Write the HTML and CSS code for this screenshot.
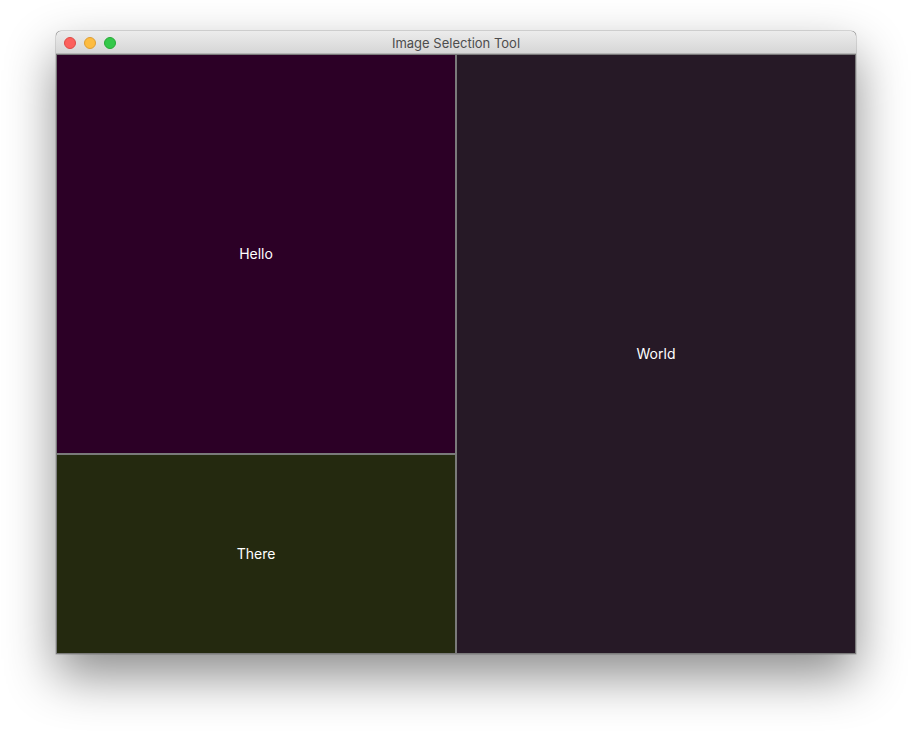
FILE: index.html
```html
<!DOCTYPE html>
<html>
<head>
<meta charset="utf-8">
<link rel="stylesheet" href="styles.css">
</head>
<body>
<div class="window">
  <div class="titlebar">
    <div class="lights">
      <span class="light close"></span>
      <span class="light min"></span>
      <span class="light max"></span>
    </div>
    <div class="title">Image Selection Tool</div>
  </div>
  <div class="content">
    <div class="col">
      <div class="cell hello">Hello</div>
      <div class="cell there">There</div>
    </div>
    <div class="cell world">World</div>
  </div>
</div>
</body>
</html>
```
FILE: styles.css
```css
html, body {
  margin: 0;
  padding: 0;
  background: #ffffff;
}
body {
  box-sizing: border-box;
  min-height: 734px;
  padding: 31px 0 80px 56px;
  font-family: "Open Sans", "Liberation Sans", sans-serif;
}
.window {
  width: 800px;
  border-radius: 5px 5px 0 0;
  box-shadow: 0 0 0 0.5px rgba(0,0,0,0.25), 0 22px 50px rgba(0,0,0,0.45);
  background: #1e1e1e;
}
.titlebar {
  position: relative;
  height: 23px;
  box-sizing: border-box;
  border-radius: 5px 5px 0 0;
  background: linear-gradient(#ececec, #d6d6d6);
  border-bottom: 1px solid #b5b5b5;
  display: flex;
  align-items: center;
  justify-content: center;
  padding-top: 2px;
}
.lights {
  position: absolute;
  left: 8px;
  top: 6px;
  display: flex;
  gap: 8px;
}
.light {
  width: 12px;
  height: 12px;
  border-radius: 50%;
  box-sizing: border-box;
}
.close { background: #fc605c; border: 0.5px solid #de4a45; }
.min { background: #fdbc40; border: 0.5px solid #de9e33; }
.max { background: #34c84a; border: 0.5px solid #27aa35; }
.title {
  font-size: 13px;
  color: #4d4d4d;
  line-height: 20px;
  font-family: "Inter", "Liberation Sans", sans-serif;
}
.content {
  display: flex;
  height: 600px;
}
.col {
  display: flex;
  flex-direction: column;
  width: 400px;
}
.cell {
  box-sizing: border-box;
  border: 1px solid #7a7a7a;
  display: flex;
  align-items: center;
  justify-content: center;
  color: #ffffff;
  font-size: 14px;
  padding-bottom: 2px;
  font-family: "Inter", "Liberation Sans", sans-serif;
}
.hello {
  height: 400px;
  background: #2c0026;
}
.there {
  height: 200px;
  background: #24290f;
}
.world {
  width: 400px;
  height: 600px;
  background: #261926;
}
```
